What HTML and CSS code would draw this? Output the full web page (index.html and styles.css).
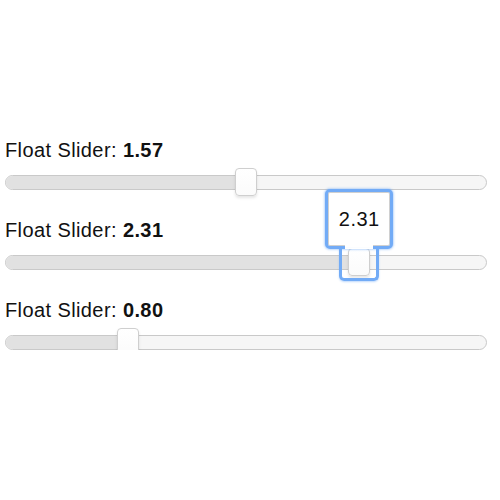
FILE: index.html
```html
<!DOCTYPE html>
<html lang="en">
<head>
  <meta charset="UTF-8" />
  <title>Float Sliders</title>
  <link rel="stylesheet" href="styles.css">
</head>
<body>

  <div class="widgets">

    <!-- ───── slider 1 ───── -->
    <div class="slider-widget">
      <div class="slider-label">Float Slider: <b>1.57</b></div>
      <div class="slider-track">
        <div class="slider-range" style="width: 50%"></div>
        <div class="slider-handle" style="left: 50%"></div>
      </div>
    </div>

    <!-- ───── slider 2 (focused, shows readout) ───── -->
    <div class="slider-widget">
      <div class="slider-label">Float Slider: <b>2.31</b></div>
      <div class="slider-track">
        <div class="slider-range" style="width: 73.6%"></div>
        <div class="slider-handle is-focused" style="left: 73.6%">
          <div class="slider-tip">2.31</div>
          <div class="slider-ring"></div>
        </div>
      </div>
    </div>

    <!-- ───── slider 3 ───── -->
    <div class="slider-widget">
      <div class="slider-label">Float Slider: <b>0.80</b></div>
      <div class="slider-track">
        <div class="slider-range" style="width: 25.5%"></div>
        <div class="slider-handle" style="left: 25.5%"></div>
      </div>
    </div>

  </div>

</body>
</html>
```

FILE: styles.css
```css
:root {
  /* colours */
  --c-text:        #111111;
  --c-border:      #c9c9c9;
  --c-focus:       #72abf6;
  --c-focus-glow:  rgba(114, 171, 246, 0.45);

  /* backgrounds */
  --bg-page:   #ffffff;
  --bg-track:  #f6f6f6;
  --bg-range:  #e1e1e1;
  --bg-handle: #fbfbfb;

  --font-base: "Liberation Sans", Arial, sans-serif;
}

/* ───── base layout ───── */
body {
  margin: 0;
  background: var(--bg-page);
  font-family: var(--font-base);
  color: var(--c-text);
}

.widgets {
  width: 482px;
  padding: 138px 0 0 5px;
  display: flex;
  flex-direction: column;
  gap: 28px;
}

/* ───── label ───── */
.slider-label {
  font-size: 20px;
  line-height: 24px;
  letter-spacing: 0.4px;
  margin-bottom: 13px;
}
.slider-label b { font-weight: bold; }

/* ───── track ───── */
.slider-track {
  position: relative;
  height: 15px;
  box-sizing: border-box;
  border: 1px solid var(--c-border);
  border-radius: 8px;
  background: var(--bg-track);
}

.slider-range {
  height: 100%;
  background: var(--bg-range);
  border-radius: 7px 0 0 7px;
}

/* ───── handle ───── */
.slider-handle {
  position: absolute;
  top: -8px;
  width: 22px;
  height: 28px;
  margin-left: -11px;
  box-sizing: border-box;
  border: 1px solid #cfcfcf;
  border-radius: 4px;
  background: linear-gradient(#ffffff, var(--bg-handle));
  box-shadow: 0 2px 3px rgba(0, 0, 0, 0.1);
}

/* ───── readout tooltip (focused handle) ───── */
.slider-tip {
  position: absolute;
  bottom: 100%;
  left: 50%;
  transform: translateX(-50%);
  width: 68px;
  height: 60px;
  box-sizing: border-box;
  border: 3px solid var(--c-focus);
  border-radius: 5px;
  background: #ffffff;
  box-shadow: 0 0 2px 1px var(--c-focus-glow), inset 0 0 0 1px #d0d0d0;
  display: flex;
  align-items: center;
  justify-content: center;
  font-size: 20px;
  letter-spacing: 0.5px;
  color: var(--c-text);
}

/* open the bottom edge where the ring joins */
.slider-tip::after {
  content: "";
  position: absolute;
  left: 50%;
  bottom: -3px;
  width: 28px;
  height: 4px;
  margin-left: -14px;
  background: #ffffff;
}

.slider-ring {
  position: absolute;
  top: -1px;
  left: -10px;
  right: -10px;
  bottom: -6px;
  border: 3px solid var(--c-focus);
  border-top: none;
  border-radius: 0 0 5px 5px;
  box-shadow: 0 1px 2px var(--c-focus-glow);
  pointer-events: none;
}
```
